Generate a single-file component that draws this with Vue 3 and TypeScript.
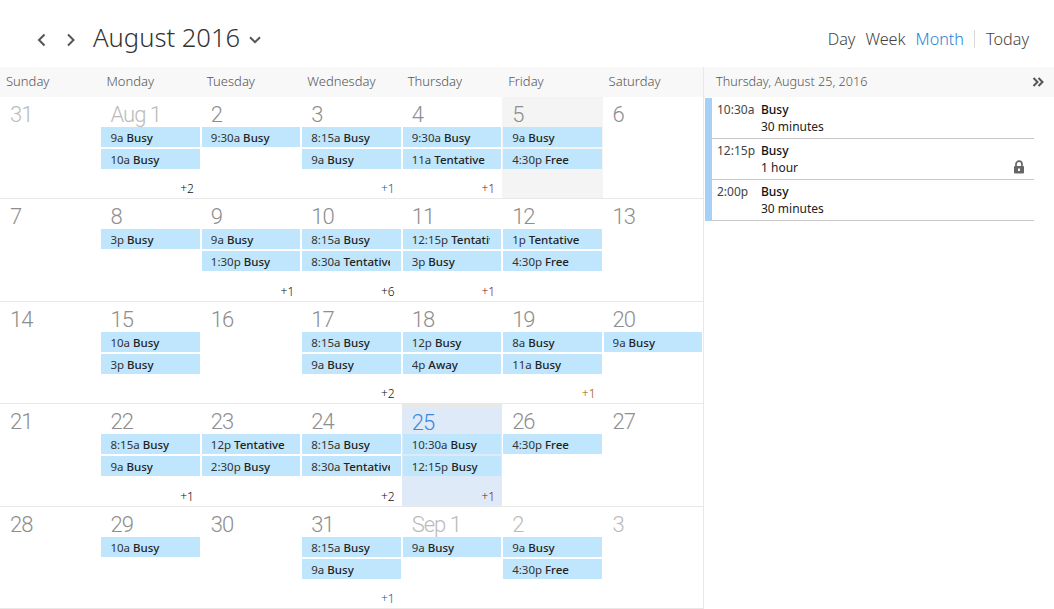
<script setup lang="ts">
interface Ev {
  time: string
  label: string
}
interface Day {
  date: string
  muted?: boolean
  shaded?: boolean
  today?: boolean
  events?: Ev[]
  more?: string
  moreColor?: string
}

const ev = (time: string, label: string): Ev => ({ time, label })
const weekdays = ['Sunday', 'Monday', 'Tuesday', 'Wednesday', 'Thursday', 'Friday', 'Saturday']
const BLUE = '#0b5c94'
const RED = '#7a1522'
const ORANGE = '#96580a'

const days: Day[] = [
  { date: '31', muted: true },
  { date: 'Aug 1', muted: true, events: [ev('9a', 'Busy'), ev('10a', 'Busy')], more: '+2' },
  { date: '2', events: [ev('9:30a', 'Busy')] },
  { date: '3', events: [ev('8:15a', 'Busy'), ev('9a', 'Busy')], more: '+1', moreColor: BLUE },
  { date: '4', events: [ev('9:30a', 'Busy'), ev('11a', 'Tentative')], more: '+1', moreColor: RED },
  { date: '5', shaded: true, events: [ev('9a', 'Busy'), ev('4:30p', 'Free')] },
  { date: '6' },
  { date: '7' },
  { date: '8', events: [ev('3p', 'Busy')] },
  { date: '9', events: [ev('9a', 'Busy'), ev('1:30p', 'Busy')], more: '+1' },
  { date: '10', events: [ev('8:15a', 'Busy'), ev('8:30a', 'Tentative')], more: '+6' },
  { date: '11', events: [ev('12:15p', 'Tentative'), ev('3p', 'Busy')], more: '+1', moreColor: RED },
  { date: '12', events: [ev('1p', 'Tentative'), ev('4:30p', 'Free')] },
  { date: '13' },
  { date: '14' },
  { date: '15', events: [ev('10a', 'Busy'), ev('3p', 'Busy')] },
  { date: '16' },
  { date: '17', events: [ev('8:15a', 'Busy'), ev('9a', 'Busy')], more: '+2' },
  { date: '18', events: [ev('12p', 'Busy'), ev('4p', 'Away')] },
  { date: '19', events: [ev('8a', 'Busy'), ev('11a', 'Busy')], more: '+1', moreColor: ORANGE },
  { date: '20', events: [ev('9a', 'Busy')] },
  { date: '21' },
  { date: '22', events: [ev('8:15a', 'Busy'), ev('9a', 'Busy')], more: '+1' },
  { date: '23', events: [ev('12p', 'Tentative'), ev('2:30p', 'Busy')] },
  { date: '24', events: [ev('8:15a', 'Busy'), ev('8:30a', 'Tentative')], more: '+2' },
  { date: '25', today: true, events: [ev('10:30a', 'Busy'), ev('12:15p', 'Busy')], more: '+1', moreColor: RED },
  { date: '26', events: [ev('4:30p', 'Free')] },
  { date: '27' },
  { date: '28' },
  { date: '29', events: [ev('10a', 'Busy')] },
  { date: '30' },
  { date: '31', events: [ev('8:15a', 'Busy'), ev('9a', 'Busy')], more: '+1', moreColor: BLUE },
  { date: 'Sep 1', muted: true, events: [ev('9a', 'Busy')] },
  { date: '2', muted: true, events: [ev('9a', 'Busy'), ev('4:30p', 'Free')] },
  { date: '3', muted: true },
]

const agenda = [
  { time: '10:30a', title: 'Busy', length: '30 minutes', locked: false },
  { time: '12:15p', title: 'Busy', length: '1 hour', locked: true },
  { time: '2:00p', title: 'Busy', length: '30 minutes', locked: false },
]
</script>

<template>
  <div class="page">
    <header class="toolbar">
      <div class="nav">
        <button class="arrow">
          <svg width="12" height="16" viewBox="0 0 12 16"><path d="M9.5 2.5 4 8l5.5 5.5" /></svg>
        </button>
        <button class="arrow next">
          <svg width="12" height="16" viewBox="0 0 12 16"><path d="M3 2.5 8.5 8 3 13.5" /></svg>
        </button>
        <h1 class="title">August 2016</h1>
        <svg class="caret" width="12" height="8" viewBox="0 0 12 8"><path d="M1 1.2 6 6.2l5-5" /></svg>
      </div>
      <nav class="views">
        <span>Day</span>
        <span>Week</span>
        <span class="current">Month</span>
        <i class="divider"></i>
        <span>Today</span>
      </nav>
    </header>

    <main class="body">
      <section class="calendar">
        <div class="weekdays">
          <div v-for="name in weekdays" :key="name" class="weekday">{{ name }}</div>
        </div>
        <div class="grid">
          <div
            v-for="(day, i) in days"
            :key="i"
            class="cell"
            :class="{ shaded: day.shaded, today: day.today }"
          >
            <div class="date" :class="{ muted: day.muted }">{{ day.date }}</div>
            <div v-for="(item, j) in day.events" :key="j" class="event">
              <span>{{ item.time }} <b>{{ item.label }}</b></span>
            </div>
            <div v-if="day.more" class="more" :style="{ color: day.moreColor }">{{ day.more }}</div>
          </div>
        </div>
      </section>

      <aside class="side">
        <div class="side-head">
          <span>Thursday, August 25, 2016</span>
          <svg width="12" height="10" viewBox="0 0 12 10"><path d="M1.5 1l4 4-4 4M6.5 1l4 4-4 4" /></svg>
        </div>
        <ul class="agenda">
          <li v-for="row in agenda" :key="row.time" class="agenda-row">
            <span class="agenda-time">{{ row.time }}</span>
            <div class="agenda-text">
              <div class="agenda-title">{{ row.title }}</div>
              <div>{{ row.length }}</div>
            </div>
            <svg v-if="row.locked" class="lock" width="12" height="14" viewBox="0 0 12 14">
              <path d="M3 6.5V4.2a3 3 0 0 1 6 0v2.3" fill="none" stroke="#666" stroke-width="1.7" />
              <rect x="1" y="6" width="10" height="7.5" rx="1" fill="#666" />
              <rect x="5" y="8.5" width="2" height="2.5" fill="#fff" />
            </svg>
          </li>
        </ul>
      </aside>
    </main>
  </div>
</template>

<style>
body {
  margin: 0;
  background: #fff;
}
</style>

<style scoped>
.page {
  width: 1054px;
  height: 609px;
  overflow: hidden;
  font-family: "Noto Sans", "Open Sans", sans-serif;
  color: #333;
}

.toolbar {
  height: 67px;
  box-sizing: border-box;
  padding: 9px 25px 0 35px;
  display: flex;
  justify-content: space-between;
  align-items: center;
}

.nav {
  display: flex;
  align-items: center;
}

.arrow {
  width: 12px;
  height: 16px;
  padding: 0;
  border: 0;
  background: none;
  display: flex;
  margin-top: 3px;
}

.arrow.next {
  margin-left: 18px;
}

.arrow path,
.caret path,
.side-head path {
  fill: none;
  stroke: #555;
  stroke-width: 2;
}

.title {
  margin: 0 0 0 16px;
  font-size: 25.6px;
  font-weight: 300;
  line-height: 34px;
  color: #333;
}

.caret {
  margin: 3px 0 0 9px;
}

.views {
  display: flex;
  align-items: center;
  gap: 10px;
  margin-top: 1px;
  font-size: 16.2px;
  font-weight: 300;
  color: #444;
}

.current {
  color: #1f83d8;
}

.divider {
  width: 1px;
  height: 18px;
  background: #d8d8d8;
  margin-right: 1px;
}

.body {
  display: flex;
  height: 542px;
}

.calendar {
  width: 703px;
  border-right: 1px solid #e8e8e8;
}

.weekdays {
  display: grid;
  grid-template-columns: repeat(7, 1fr);
  height: 30px;
  background: #f8f8f8;
}

.weekday {
  padding-left: 6px;
  font-size: 13px;
  font-weight: 300;
  line-height: 29px;
  color: #555;
}

.grid {
  display: grid;
  grid-template-columns: repeat(7, 1fr);
  grid-template-rows: repeat(5, 1fr);
  height: 512px;
}

.cell {
  position: relative;
  box-sizing: border-box;
  min-width: 0;
  padding: 0 1px;
  border-bottom: 1px solid #e8e8e8;
}

.cell.shaded {
  background: #f4f4f4;
}

.cell.today {
  background: #deeaf8;
  border-top: 4px solid #e8e8e8;
  margin-top: -1px;
}

.date {
  height: 30px;
  padding-left: 9px;
  font-family: Roboto, "Noto Sans", sans-serif;
  font-size: 22px;
  font-weight: 300;
  line-height: 35px;
  letter-spacing: -1px;
  color: #8e8e8e;
}

.today .date {
  color: #3b87dc;
  line-height: 31px;
  height: 27px;
}

.date.muted {
  color: #bbb;
}

.event {
  height: 20px;
  margin-bottom: 2px;
  padding: 0 11px 0 9px;
  background: #bfe6fc;
  font-size: 11.5px;
  line-height: 21px;
  white-space: nowrap;
  overflow: hidden;
  color: #333;
}

.event span {
  display: block;
  overflow: hidden;
}

.event b {
  font-weight: 500;
  color: #222;
}

.more {
  position: absolute;
  right: 7px;
  bottom: 1px;
  font-size: 12px;
  font-weight: 300;
  line-height: 16px;
  color: #111;
}

.side {
  flex: 1;
  min-width: 0;
}

.side-head {
  height: 30px;
  box-sizing: border-box;
  padding: 0 10px 1px 12px;
  display: flex;
  justify-content: space-between;
  align-items: center;
  background: #f8f8f8;
  font-size: 12.6px;
  font-weight: 300;
  color: #555;
}

.agenda {
  list-style: none;
  margin: 1px 0 0 1px;
  padding: 0;
  width: 322px;
  border-left: 7px solid #a6d0f5;
}

.agenda-row {
  position: relative;
  display: flex;
  height: 41px;
  box-sizing: border-box;
  padding: 3px 0 0 5px;
  border-bottom: 1px solid #c8c8c8;
  font-size: 12px;
  line-height: 17px;
}

.agenda-time {
  width: 44px;
  color: #444;
}

.agenda-title {
  font-weight: 500;
  color: #111;
}

.agenda-text {
  color: #222;
}

.lock {
  position: absolute;
  right: 9px;
  bottom: 5px;
}
</style>
